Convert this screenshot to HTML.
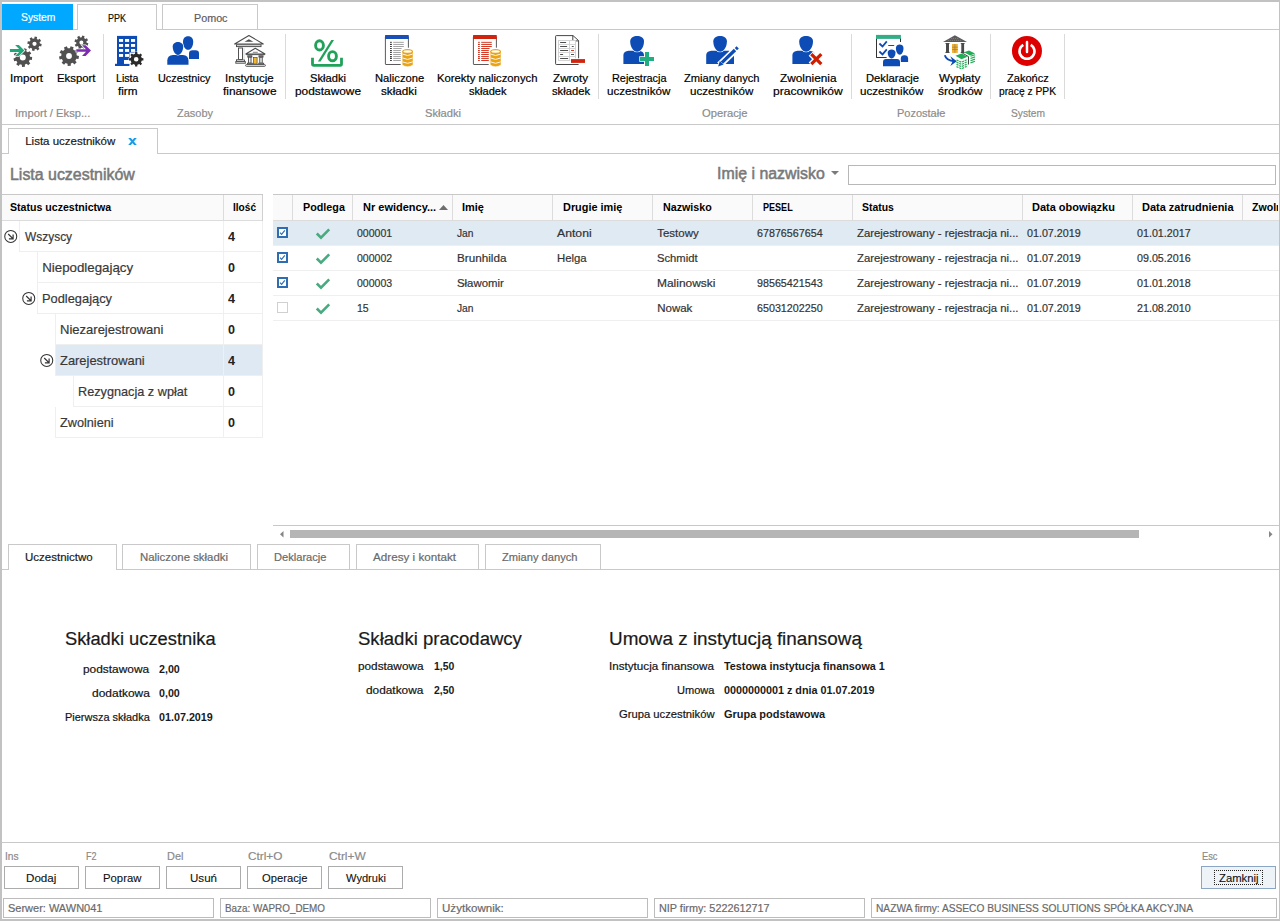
<!DOCTYPE html>
<html><head><meta charset="utf-8"><style>
html,body{margin:0;padding:0;}
body{width:1280px;height:921px;position:relative;overflow:hidden;background:#fff;font-family:"Liberation Sans",sans-serif;}
.t{position:absolute;white-space:pre;line-height:1;transform-origin:0 0;}
svg{position:absolute;overflow:visible;}
</style></head><body>
<div style="position:absolute;left:2px;top:29px;width:1277px;height:1px;background:#c9c9c9"></div>
<div style="position:absolute;left:2px;top:4px;width:71px;height:26px;background:#00a9ff"></div>
<div class="t" style="left:20.60px;top:11.60px;font-size:11.5px;font-weight:400;color:#ffffff;transform:scaleX(0.8971);-webkit-text-stroke:0.2px #ffffff;">System</div>
<div style="position:absolute;left:77px;top:4px;width:80px;height:26px;box-sizing:border-box;border:1px solid #c9c9c9;border-bottom:none;background:#fff"></div>
<div class="t" style="left:108.30px;top:12.60px;font-size:11.5px;font-weight:400;color:#101010;transform:scaleX(0.7821);-webkit-text-stroke:0.2px #101010;">PPK</div>
<div style="position:absolute;left:162px;top:4px;width:96px;height:26px;box-sizing:border-box;border:1px solid #c9c9c9;background:#fff"></div>
<div class="t" style="left:193.55px;top:12.60px;font-size:11.5px;font-weight:400;color:#5e5a60;transform:scaleX(0.9358);-webkit-text-stroke:0.2px #5e5a60;">Pomoc</div>
<div style="position:absolute;left:103px;top:34px;width:1px;height:65px;background:#dadada"></div>
<div style="position:absolute;left:285px;top:34px;width:1px;height:65px;background:#dadada"></div>
<div style="position:absolute;left:598px;top:34px;width:1px;height:65px;background:#dadada"></div>
<div style="position:absolute;left:851px;top:34px;width:1px;height:65px;background:#dadada"></div>
<div style="position:absolute;left:990px;top:34px;width:1px;height:65px;background:#dadada"></div>
<div style="position:absolute;left:1064px;top:34px;width:1px;height:65px;background:#dadada"></div>
<div style="position:absolute;left:2px;top:124px;width:1277px;height:1px;background:#c9c9c9"></div>
<div class="t" style="left:9.80px;top:72.60px;font-size:11.5px;font-weight:400;color:#000000;transform:scaleX(1.0125);-webkit-text-stroke:0.2px #000000;">Import</div>
<div class="t" style="left:56.55px;top:72.60px;font-size:11.5px;font-weight:400;color:#000000;transform:scaleX(0.9872);-webkit-text-stroke:0.2px #000000;">Eksport</div>
<div class="t" style="left:116.25px;top:72.60px;font-size:11.5px;font-weight:400;color:#000000;transform:scaleX(0.9260);-webkit-text-stroke:0.2px #000000;">Lista</div>
<div class="t" style="left:117.75px;top:85.60px;font-size:11.5px;font-weight:400;color:#000000;transform:scaleX(1.0171);-webkit-text-stroke:0.2px #000000;">firm</div>
<div class="t" style="left:157.55px;top:72.60px;font-size:11.5px;font-weight:400;color:#000000;transform:scaleX(0.9441);-webkit-text-stroke:0.2px #000000;">Uczestnicy</div>
<div class="t" style="left:225.10px;top:72.60px;font-size:11.5px;font-weight:400;color:#000000;-webkit-text-stroke:0.2px #000000;">Instytucje</div>
<div class="t" style="left:222.75px;top:85.60px;font-size:11.5px;font-weight:400;color:#000000;transform:scaleX(1.0329);-webkit-text-stroke:0.2px #000000;">finansowe</div>
<div class="t" style="left:309.50px;top:72.60px;font-size:11.5px;font-weight:400;color:#000000;transform:scaleX(0.9709);-webkit-text-stroke:0.2px #000000;">Składki</div>
<div class="t" style="left:294.50px;top:85.60px;font-size:11.5px;font-weight:400;color:#000000;transform:scaleX(1.0323);-webkit-text-stroke:0.2px #000000;">podstawowe</div>
<div class="t" style="left:374.60px;top:72.60px;font-size:11.5px;font-weight:400;color:#000000;transform:scaleX(0.9743);-webkit-text-stroke:0.2px #000000;">Naliczone</div>
<div class="t" style="left:381.30px;top:85.60px;font-size:11.5px;font-weight:400;color:#000000;transform:scaleX(1.0183);-webkit-text-stroke:0.2px #000000;">składki</div>
<div class="t" style="left:437.05px;top:72.60px;font-size:11.5px;font-weight:400;color:#000000;transform:scaleX(0.9826);-webkit-text-stroke:0.2px #000000;">Korekty naliczonych</div>
<div class="t" style="left:468.55px;top:85.60px;font-size:11.5px;font-weight:400;color:#000000;transform:scaleX(0.9615);-webkit-text-stroke:0.2px #000000;">składek</div>
<div class="t" style="left:553.30px;top:72.60px;font-size:11.5px;font-weight:400;color:#000000;transform:scaleX(1.0145);-webkit-text-stroke:0.2px #000000;">Zwroty</div>
<div class="t" style="left:551.80px;top:85.60px;font-size:11.5px;font-weight:400;color:#000000;transform:scaleX(0.9744);-webkit-text-stroke:0.2px #000000;">składek</div>
<div class="t" style="left:611.75px;top:72.60px;font-size:11.5px;font-weight:400;color:#000000;transform:scaleX(0.9473);-webkit-text-stroke:0.2px #000000;">Rejestracja</div>
<div class="t" style="left:607.35px;top:85.60px;font-size:11.5px;font-weight:400;color:#000000;transform:scaleX(1.0105);-webkit-text-stroke:0.2px #000000;">uczestników</div>
<div class="t" style="left:684.05px;top:72.60px;font-size:11.5px;font-weight:400;color:#000000;transform:scaleX(0.9681);-webkit-text-stroke:0.2px #000000;">Zmiany danych</div>
<div class="t" style="left:690.15px;top:85.60px;font-size:11.5px;font-weight:400;color:#000000;transform:scaleX(1.0105);-webkit-text-stroke:0.2px #000000;">uczestników</div>
<div class="t" style="left:779.85px;top:72.60px;font-size:11.5px;font-weight:400;color:#000000;transform:scaleX(1.0276);-webkit-text-stroke:0.2px #000000;">Zwolnienia</div>
<div class="t" style="left:773.20px;top:85.60px;font-size:11.5px;font-weight:400;color:#000000;transform:scaleX(1.0499);-webkit-text-stroke:0.2px #000000;">pracowników</div>
<div class="t" style="left:865.60px;top:72.60px;font-size:11.5px;font-weight:400;color:#000000;transform:scaleX(0.9756);-webkit-text-stroke:0.2px #000000;">Deklaracje</div>
<div class="t" style="left:860.45px;top:85.60px;font-size:11.5px;font-weight:400;color:#000000;transform:scaleX(1.0105);-webkit-text-stroke:0.2px #000000;">uczestników</div>
<div class="t" style="left:939.15px;top:72.60px;font-size:11.5px;font-weight:400;color:#000000;transform:scaleX(1.0123);-webkit-text-stroke:0.2px #000000;">Wypłaty</div>
<div class="t" style="left:937.55px;top:85.60px;font-size:11.5px;font-weight:400;color:#000000;transform:scaleX(1.0390);-webkit-text-stroke:0.2px #000000;">środków</div>
<div class="t" style="left:1006.70px;top:72.60px;font-size:11.5px;font-weight:400;color:#000000;transform:scaleX(0.9616);-webkit-text-stroke:0.2px #000000;">Zakończ</div>
<div class="t" style="left:999.10px;top:85.60px;font-size:11.5px;font-weight:400;color:#000000;transform:scaleX(0.8917);-webkit-text-stroke:0.2px #000000;">pracę z PPK</div>
<div class="t" style="left:14.65px;top:107.60px;font-size:11.5px;font-weight:400;color:#8c8c8c;transform:scaleX(0.9738);-webkit-text-stroke:0.2px #8c8c8c;">Import / Eksp...</div>
<div class="t" style="left:177.00px;top:107.60px;font-size:11.5px;font-weight:400;color:#8c8c8c;transform:scaleX(0.9544);-webkit-text-stroke:0.2px #8c8c8c;">Zasoby</div>
<div class="t" style="left:424.50px;top:107.60px;font-size:11.5px;font-weight:400;color:#8c8c8c;transform:scaleX(0.9709);-webkit-text-stroke:0.2px #8c8c8c;">Składki</div>
<div class="t" style="left:702.45px;top:107.60px;font-size:11.5px;font-weight:400;color:#8c8c8c;transform:scaleX(0.9749);-webkit-text-stroke:0.2px #8c8c8c;">Operacje</div>
<div class="t" style="left:897.45px;top:107.60px;font-size:11.5px;font-weight:400;color:#8c8c8c;transform:scaleX(0.9561);-webkit-text-stroke:0.2px #8c8c8c;">Pozostałe</div>
<div class="t" style="left:1010.50px;top:107.60px;font-size:11.5px;font-weight:400;color:#8c8c8c;transform:scaleX(0.8867);-webkit-text-stroke:0.2px #8c8c8c;">System</div>
<svg style="left:6px;top:32px" width="40" height="38" viewBox="0 0 40 38"><path fill-rule="evenodd" fill="#505050" d="M33.90 11.59 L35.70 11.97 L35.20 14.45 L33.39 14.10 L32.47 15.46 L33.47 17.01 L31.36 18.41 L30.33 16.88 L28.71 17.20 L28.33 19.00 L25.85 18.50 L26.20 16.69 L24.84 15.77 L23.29 16.77 L21.89 14.66 L23.42 13.63 L23.10 12.01 L21.30 11.63 L21.80 9.15 L23.61 9.50 L24.53 8.14 L23.53 6.59 L25.64 5.19 L26.67 6.72 L28.29 6.40 L28.67 4.60 L31.15 5.10 L30.80 6.91 L32.16 7.83 L33.71 6.83 L35.11 8.94 L33.58 9.97 Z M30.60 11.80 A2.1 2.1 0 1 0 26.40 11.80 A2.1 2.1 0 1 0 30.60 11.80 Z"/><path fill-rule="evenodd" fill="#505050" d="M24.05 24.78 L26.18 25.06 L25.89 27.99 L23.75 27.85 L22.89 29.63 L24.33 31.22 L22.23 33.27 L20.68 31.79 L18.87 32.60 L18.96 34.75 L16.02 34.97 L15.79 32.83 L13.89 32.29 L12.57 34.00 L10.18 32.28 L11.38 30.49 L10.27 28.85 L8.16 29.31 L7.44 26.46 L9.50 25.86 L9.70 23.89 L7.80 22.89 L9.07 20.24 L11.04 21.11 L12.46 19.73 L11.64 17.74 L14.32 16.53 L15.27 18.46 L17.25 18.31 L17.90 16.26 L20.73 17.06 L20.22 19.15 L21.83 20.31 L23.64 19.16 L25.30 21.59 L23.57 22.86 Z M19.80 25.60 A3.0 3.0 0 1 0 13.80 25.60 A3.0 3.0 0 1 0 19.80 25.60 Z"/><path d="M3.9 16.9 L14.6 16.9 L14.6 20 L3.9 20 Z M9.1 13 L12.9 13 L18.4 18.45 L12.9 24 L9.1 24 L14.6 18.45 Z" fill="#1fa67a" stroke="#fff" stroke-width="1.5" paint-order="stroke"/></svg>
<svg style="left:55px;top:32px" width="40" height="38" viewBox="0 0 40 38"><path fill-rule="evenodd" fill="#505050" d="M31.59 10.81 L33.35 11.36 L32.62 13.71 L30.86 13.17 L29.85 14.39 L30.70 16.02 L28.53 17.17 L27.67 15.54 L26.09 15.69 L25.54 17.45 L23.19 16.72 L23.73 14.96 L22.51 13.95 L20.88 14.80 L19.73 12.63 L21.36 11.77 L21.21 10.19 L19.45 9.64 L20.18 7.29 L21.94 7.83 L22.95 6.61 L22.10 4.98 L24.27 3.83 L25.13 5.46 L26.71 5.31 L27.26 3.55 L29.61 4.28 L29.07 6.04 L30.29 7.05 L31.92 6.20 L33.07 8.37 L31.44 9.23 Z M28.40 10.50 A2.0 2.0 0 1 0 24.40 10.50 A2.0 2.0 0 1 0 28.40 10.50 Z"/><path fill-rule="evenodd" fill="#505050" d="M21.78 23.51 L24.00 23.93 L23.53 27.02 L21.29 26.77 L20.28 28.63 L21.71 30.37 L19.36 32.44 L17.81 30.81 L15.83 31.58 L15.81 33.84 L12.68 33.91 L12.54 31.66 L10.53 30.99 L9.06 32.70 L6.62 30.74 L7.96 28.93 L6.85 27.12 L4.63 27.49 L4.01 24.42 L6.20 23.89 L6.52 21.80 L4.58 20.65 L6.08 17.90 L8.09 18.90 L9.68 17.50 L8.94 15.38 L11.85 14.23 L12.75 16.30 L14.87 16.25 L15.67 14.14 L18.63 15.14 L17.99 17.30 L19.65 18.62 L21.61 17.52 L23.25 20.19 L21.37 21.43 Z M16.90 24.00 A2.9 2.9 0 1 0 11.10 24.00 A2.9 2.9 0 1 0 16.90 24.00 Z"/><path d="M21.3 17.2 L32.2 17.2 L32.2 19.7 L21.3 19.7 Z M27 13.2 L30.6 13.2 L36 18.45 L30.6 24 L27 24 L32.2 18.45 Z" fill="#7b2cb0" stroke="#fff" stroke-width="1.5" paint-order="stroke"/></svg>
<svg style="left:110px;top:32px" width="40" height="38" viewBox="0 0 40 38"><rect x="7" y="3.9" width="20.1" height="29" fill="#0d4cb4"/><rect x="5" y="31.8" width="14.8" height="2.2" fill="#0d4cb4"/><rect x="9" y="7" width="4.1" height="2.9" fill="#fff"/><rect x="15" y="7" width="4.1" height="2.9" fill="#fff"/><rect x="21" y="7" width="4.1" height="2.9" fill="#fff"/><rect x="9" y="12" width="4.1" height="2.9" fill="#fff"/><rect x="15" y="12" width="4.1" height="2.9" fill="#fff"/><rect x="21" y="12" width="4.1" height="2.9" fill="#fff"/><rect x="9" y="17" width="4.1" height="2.9" fill="#fff"/><rect x="15" y="17" width="4.1" height="2.9" fill="#fff"/><rect x="21" y="17" width="4.1" height="2.9" fill="#fff"/><rect x="9" y="22" width="4.1" height="2.9" fill="#fff"/><rect x="15" y="22" width="4.1" height="2.9" fill="#fff"/><rect x="14" y="28" width="6" height="3.9" fill="#fff"/><rect x="19.5" y="20.5" width="9" height="14" fill="#fff"/><path fill-rule="evenodd" fill="#2b2b2b" stroke="#fff" stroke-width="0.8" paint-order="stroke" d="M25.00 21.73 L25.11 20.08 L27.29 20.08 L27.40 21.73 L29.29 22.51 L30.54 21.43 L32.07 22.96 L30.99 24.21 L31.77 26.10 L33.42 26.21 L33.42 28.39 L31.77 28.50 L30.99 30.39 L32.07 31.64 L30.54 33.17 L29.29 32.09 L27.40 32.87 L27.29 34.52 L25.11 34.52 L25.00 32.87 L23.11 32.09 L21.86 33.17 L20.33 31.64 L21.41 30.39 L20.63 28.50 L18.98 28.39 L18.98 26.21 L20.63 26.10 L21.41 24.21 L20.33 22.96 L21.86 21.43 L23.11 22.51 Z M28.50 27.30 A2.3 2.3 0 1 0 23.90 27.30 A2.3 2.3 0 1 0 28.50 27.30 Z"/></svg>
<svg style="left:163px;top:32px" width="40" height="38" viewBox="0 0 40 38"><path d="M26 27 L26 21.5 Q26 18.2 29.5 18.2 L32.5 18.2 Q36 18.2 36 21.5 L36 27 Z" fill="#0d4cb4"/><path d="M20 9.5 C20 2.5 30.2 2.5 30.2 9.5 C30.2 14.5 28 17.8 25.1 17.8 C22.2 17.8 20 14.5 20 9.5 Z" fill="#0d4cb4" stroke="#fff" stroke-width="1.1" paint-order="stroke"/><path d="M4.3 32.8 L4.3 28.5 Q4.5 23.3 10 23 L20 23 Q25.3 23.3 25.5 28.5 L25.5 32.8 Z" fill="#0d4cb4" stroke="#fff" stroke-width="1.2" paint-order="stroke"/><path d="M9.7 14.5 C9.7 8.5 20.2 8.5 20.2 14.5 C20.2 19 17.5 22.9 14.95 22.9 C12.4 22.9 9.7 19 9.7 14.5 Z" fill="#0d4cb4" stroke="#fff" stroke-width="1.2" paint-order="stroke"/></svg>
<svg style="left:230px;top:32px" width="40" height="38" viewBox="0 0 40 38"><path d="M4.6 12 L18.9 3.5 L33.3 12 Z" fill="#fff" stroke="#4a4a4a" stroke-width="1.05" stroke-linejoin="round"/><path d="M14.5 9.8 L18.9 7.3 L23.3 9.8 Z" fill="#4a4a4a"/><rect x="6.5" y="12.8" width="24.5" height="1.8" fill="#fff" stroke="#4a4a4a" stroke-width="0.95"/><rect x="8.5" y="16" width="4" height="11.5" fill="#fff" stroke="#4a4a4a" stroke-width="0.95"/><rect x="6.5" y="27.8" width="8" height="1.6" fill="#fff" stroke="#4a4a4a" stroke-width="0.95"/><rect x="5.8" y="29.6" width="9.5" height="1.6" fill="#fff" stroke="#4a4a4a" stroke-width="0.95"/><path d="M14 16 L14 28" stroke="#d8d8d8" stroke-width="1"/><path d="M15.8 22 L25.3 16.3 L35 22 Z" fill="#fff" stroke="#4a4a4a" stroke-width="1.05" stroke-linejoin="round"/><path d="M22.8 20.3 L27.8 20.3" stroke="#4a4a4a" stroke-width="0.7"/><rect x="16" y="22.2" width="19" height="0.9" fill="#4a4a4a"/><rect x="17.8" y="23.8" width="4" height="1.2" fill="#fff" stroke="#4a4a4a" stroke-width="1"/><rect x="29" y="23.8" width="4" height="1.2" fill="#fff" stroke="#4a4a4a" stroke-width="1"/><rect x="18.6" y="25.2" width="2.4" height="6" fill="#fff" stroke="#4a4a4a" stroke-width="1"/><rect x="29.8" y="25.2" width="2.4" height="6" fill="#fff" stroke="#4a4a4a" stroke-width="1"/><rect x="23.5" y="25.6" width="3.6" height="6.4" fill="#f2b731" stroke="#3d4a66" stroke-width="0.7"/><rect x="17.5" y="31.2" width="5" height="1" fill="#fff" stroke="#4a4a4a" stroke-width="0.8"/><rect x="28.7" y="31.2" width="5" height="1" fill="#fff" stroke="#4a4a4a" stroke-width="0.8"/><rect x="15.6" y="32.6" width="19.8" height="1.7" rx="0.8" fill="#fff" stroke="#4a4a4a" stroke-width="0.95"/></svg>
<svg style="left:307px;top:32px" width="40" height="38" viewBox="0 0 40 38"><ellipse cx="12.5" cy="13.4" rx="3.9" ry="4.6" fill="none" stroke="#21a25b" stroke-width="2.9"/><ellipse cx="25.5" cy="24.2" rx="3.9" ry="4.6" fill="none" stroke="#21a25b" stroke-width="2.9"/><path d="M24.3 8 L27 8 L13.6 29.6 L10.9 29.6 Z" fill="#21a25b"/><path d="M5.5 25.8 L5.5 32 Q5.5 33.3 6.8 33.3 L33.2 33.3 Q34.5 33.3 34.5 32 L34.5 25.8" fill="none" stroke="#21a25b" stroke-width="2.8"/></svg>
<svg style="left:380px;top:32px" width="40" height="38" viewBox="0 0 40 38"><path d="M20.7 32.5 L5.9 32.5 Q5.4 32.5 5.4 32 L5.4 5 L28.4 5 L28.4 15.7" fill="#fff" stroke="#474747" stroke-width="0.9"/><rect x="5.0" y="2.9" width="23.8" height="4.1" rx="0.6" fill="#1a50b6"/><rect x="10.0" y="9.75" width="1.9" height="1.1" rx="0.5" fill="#2a2a2a"/><rect x="13.2" y="9.850000000000001" width="10.6" height="0.9" fill="#9a9a9a"/><rect x="10.0" y="11.85" width="1.9" height="1.1" rx="0.5" fill="#2a2a2a"/><rect x="13.2" y="11.950000000000001" width="10.6" height="0.9" fill="#9a9a9a"/><rect x="10.0" y="13.95" width="1.9" height="1.1" rx="0.5" fill="#2a2a2a"/><rect x="13.2" y="14.05" width="10.6" height="0.9" fill="#9a9a9a"/><rect x="10.0" y="15.95" width="1.9" height="1.1" rx="0.5" fill="#2a2a2a"/><rect x="13.2" y="16.05" width="8.4" height="0.9" fill="#9a9a9a"/><rect x="10.0" y="18.05" width="1.9" height="1.1" rx="0.5" fill="#2a2a2a"/><rect x="13.2" y="18.150000000000002" width="7.6" height="0.9" fill="#9a9a9a"/><rect x="10.0" y="19.95" width="1.9" height="1.1" rx="0.5" fill="#2a2a2a"/><rect x="13.2" y="20.05" width="7.6" height="0.9" fill="#9a9a9a"/><rect x="10.0" y="21.95" width="1.9" height="1.1" rx="0.5" fill="#2a2a2a"/><rect x="13.2" y="22.05" width="7.6" height="0.9" fill="#9a9a9a"/><rect x="10.0" y="24.05" width="1.9" height="1.1" rx="0.5" fill="#2a2a2a"/><rect x="13.2" y="24.150000000000002" width="7.6" height="0.9" fill="#9a9a9a"/><rect x="10.0" y="25.849999999999998" width="1.9" height="1.1" rx="0.5" fill="#2a2a2a"/><rect x="13.2" y="25.95" width="7.6" height="0.9" fill="#9a9a9a"/><rect x="10.0" y="27.95" width="1.9" height="1.1" rx="0.5" fill="#2a2a2a"/><rect x="13.2" y="28.05" width="7.6" height="0.9" fill="#9a9a9a"/><path d="M22.200000000000003 19.4 L22.200000000000003 33.0 Q27.6 36.4 33.0 33.0 L33.0 19.4 Z" fill="#eaa312" stroke="#fff" stroke-width="0.5"/><ellipse cx="27.6" cy="19.4" rx="5.4" ry="2.3" fill="#eaa312"/><ellipse cx="27.6" cy="19.5" rx="4.2" ry="1.2" fill="#fff"/><path d="M22.6 22.1 Q27.6 24.900000000000002 32.6 22.1" fill="none" stroke="#fff" stroke-width="0.9"/><path d="M22.6 26.0 Q27.6 28.8 32.6 26.0" fill="none" stroke="#fff" stroke-width="0.9"/><path d="M22.6 29.900000000000002 Q27.6 32.7 32.6 29.900000000000002" fill="none" stroke="#fff" stroke-width="0.9"/></svg>
<svg style="left:467px;top:32px" width="40" height="38" viewBox="0 0 40 38"><path d="M21.7 32.5 L6.9 32.5 Q6.4 32.5 6.4 32 L6.4 5 L29.4 5 L29.4 15.7" fill="#fff" stroke="#474747" stroke-width="0.9"/><rect x="6.0" y="2.9" width="23.8" height="4.1" rx="0.6" fill="#d0240e"/><rect x="11.0" y="9.75" width="1.9" height="1.1" rx="0.5" fill="#d0240e"/><rect x="14.2" y="9.850000000000001" width="10.6" height="0.9" fill="#d0240e"/><rect x="11.0" y="11.85" width="1.9" height="1.1" rx="0.5" fill="#d0240e"/><rect x="14.2" y="11.950000000000001" width="10.6" height="0.9" fill="#d0240e"/><rect x="11.0" y="13.95" width="1.9" height="1.1" rx="0.5" fill="#d0240e"/><rect x="14.2" y="14.05" width="10.6" height="0.9" fill="#d0240e"/><rect x="11.0" y="15.95" width="1.9" height="1.1" rx="0.5" fill="#d0240e"/><rect x="14.2" y="16.05" width="8.4" height="0.9" fill="#d0240e"/><rect x="11.0" y="18.05" width="1.9" height="1.1" rx="0.5" fill="#d0240e"/><rect x="14.2" y="18.150000000000002" width="7.6" height="0.9" fill="#d0240e"/><rect x="11.0" y="19.95" width="1.9" height="1.1" rx="0.5" fill="#d0240e"/><rect x="14.2" y="20.05" width="7.6" height="0.9" fill="#d0240e"/><rect x="11.0" y="21.95" width="1.9" height="1.1" rx="0.5" fill="#d0240e"/><rect x="14.2" y="22.05" width="7.6" height="0.9" fill="#d0240e"/><rect x="11.0" y="24.05" width="1.9" height="1.1" rx="0.5" fill="#d0240e"/><rect x="14.2" y="24.150000000000002" width="7.6" height="0.9" fill="#d0240e"/><rect x="11.0" y="25.849999999999998" width="1.9" height="1.1" rx="0.5" fill="#d0240e"/><rect x="14.2" y="25.95" width="7.6" height="0.9" fill="#d0240e"/><rect x="11.0" y="27.95" width="1.9" height="1.1" rx="0.5" fill="#d0240e"/><rect x="14.2" y="28.05" width="7.6" height="0.9" fill="#d0240e"/><path d="M23.200000000000003 19.4 L23.200000000000003 33.0 Q28.6 36.4 34.0 33.0 L34.0 19.4 Z" fill="#eaa312" stroke="#fff" stroke-width="0.5"/><ellipse cx="28.6" cy="19.4" rx="5.4" ry="2.3" fill="#eaa312"/><ellipse cx="28.6" cy="19.5" rx="4.2" ry="1.2" fill="#fff"/><path d="M23.6 22.1 Q28.6 24.900000000000002 33.6 22.1" fill="none" stroke="#fff" stroke-width="0.9"/><path d="M23.6 26.0 Q28.6 28.8 33.6 26.0" fill="none" stroke="#fff" stroke-width="0.9"/><path d="M23.6 29.900000000000002 Q28.6 32.7 33.6 29.900000000000002" fill="none" stroke="#fff" stroke-width="0.9"/></svg>
<svg style="left:552px;top:32px" width="40" height="38" viewBox="0 0 40 38"><path d="M26.6 27 L26.6 8.6 L21 3.6 L4.3 3.6 Q3.6 3.6 3.6 4.3 L3.6 31.8 Q3.6 32.5 4.3 32.5 L26.6 32.5" fill="#fff" stroke="#474747" stroke-width="1.0"/><path d="M20.8 3.6 L20.8 8.9 L26.6 8.9" fill="none" stroke="#474747" stroke-width="1.0"/><rect x="6.5" y="8.5" width="17" height="20" fill="#fff" stroke="#cfcfcf" stroke-width="0.9"/><path d="M6.5 12.5 L23.5 12.5" stroke="#cfcfcf" stroke-width="0.9"/><path d="M6.5 16.5 L23.5 16.5" stroke="#cfcfcf" stroke-width="0.9"/><path d="M6.5 20.5 L23.5 20.5" stroke="#cfcfcf" stroke-width="0.9"/><path d="M6.5 24.5 L23.5 24.5" stroke="#cfcfcf" stroke-width="0.9"/><path d="M17.5 8.5 L17.5 28.5" stroke="#cfcfcf" stroke-width="0.9"/><rect x="8.1" y="10.05" width="6" height="0.9" fill="#3a3a3a"/><rect x="8.1" y="14.05" width="7" height="0.9" fill="#3a3a3a"/><rect x="8.1" y="18.05" width="8" height="0.9" fill="#3a3a3a"/><rect x="8.1" y="22.05" width="3" height="0.9" fill="#3a3a3a"/><rect x="8.1" y="26.05" width="8" height="0.9" fill="#3a3a3a"/><rect x="19.8" y="14.05" width="1.9" height="0.9" fill="#3a3a3a"/><rect x="19.0" y="18.05" width="3" height="0.9" fill="#d0240e"/><rect x="19.0" y="22.05" width="3" height="0.9" fill="#3a3a3a"/><rect x="18.3" y="26.3" width="15.5" height="5.3" fill="#fff"/><rect x="19" y="27.1" width="14" height="3.8" fill="#d0240e"/></svg>
<svg style="left:618px;top:32px" width="40" height="38" viewBox="0 0 40 38"><path d="M5.4 32 L5.4 23.0 Q5.7 19.2 10.600000000000001 18.8 L20.8 18.8 Q25.7 19.2 26 23.0 L26 32 Z" fill="#0d4cb4"/><path d="M12.200000000000001 9.325000000000001 C12.200000000000001 2.27 26.0 2.27 26.0 9.325000000000001 C26.0 15.55 22.55 19.7 19.1 19.7 C15.650000000000002 19.7 12.200000000000001 15.55 12.200000000000001 9.325000000000001 Z" fill="#0d4cb4" stroke="#fff" stroke-width="1.2" paint-order="stroke"/><path d="M27 20 L31 20 L31 25 L36 25 L36 29 L31 29 L31 34 L27 34 L27 29 L22 29 L22 25 L27 25 Z" fill="#21ae80" stroke="#fff" stroke-width="1.4" paint-order="stroke"/></svg>
<svg style="left:700px;top:32px" width="40" height="38" viewBox="0 0 40 38"><path d="M6.2 32 L6.2 23.0 Q6.5 19.2 11.4 18.8 L28.8 18.8 Q33.7 19.2 34 23.0 L34 32 Z" fill="#0d4cb4"/><path d="M13.3 9.325000000000001 C13.3 2.27 26.900000000000002 2.27 26.900000000000002 9.325000000000001 C26.900000000000002 15.55 23.5 19.7 20.1 19.7 C16.700000000000003 19.7 13.3 15.55 13.3 9.325000000000001 Z" fill="#0d4cb4" stroke="#fff" stroke-width="1.2" paint-order="stroke"/><path d="M19.5 33 L37.5 15.8" stroke="#fff" stroke-width="6.6"/><path d="M21.9 30.6 L35.0 18.0" stroke="#0d4cb4" stroke-width="3.3"/><path d="M35.9 17.1 L37.7 15.4" stroke="#0d4cb4" stroke-width="3.3"/><path d="M18.2 34.4 L19.8 29.0 L23.6 32.6 Z" fill="#0d4cb4"/></svg>
<svg style="left:787px;top:32px" width="40" height="38" viewBox="0 0 40 38"><path d="M5.4 32 L5.4 23.0 Q5.7 19.2 10.600000000000001 18.8 L22.8 18.8 Q27.7 19.2 28 23.0 L28 32 Z" fill="#0d4cb4"/><path d="M12.200000000000001 9.325000000000001 C12.200000000000001 2.27 26.0 2.27 26.0 9.325000000000001 C26.0 15.55 22.55 19.7 19.1 19.7 C15.650000000000002 19.7 12.200000000000001 15.55 12.200000000000001 9.325000000000001 Z" fill="#0d4cb4" stroke="#fff" stroke-width="1.2" paint-order="stroke"/><path d="M23.8 21.7 L34.8 32.7 M34.8 21.7 L23.8 32.7" stroke="#fff" stroke-width="6"/><path d="M24.3 22.2 L34.3 32.2 M34.3 22.2 L24.3 32.2" stroke="#d01e00" stroke-width="3.3"/></svg>
<svg style="left:872px;top:32px" width="40" height="38" viewBox="0 0 40 38"><path d="M4.5 6 L4.5 25.5 L14.5 25.5 M28.5 6 L28.5 10" fill="#fff" stroke="#333" stroke-width="1.0"/><rect x="4.5" y="6" width="24" height="19.5" fill="#fff"/><path d="M4.5 6 L4.5 25.5 L14.5 25.5 M28.5 6 L28.5 10" fill="none" stroke="#333" stroke-width="1.0"/><rect x="4" y="2.9" width="24.9" height="4" fill="#33ad86"/><path d="M7.4 11.5 L10.5 14.5 L14.8 9.4" fill="none" stroke="#0d4cb4" stroke-width="1.8"/><path d="M7.4 19.5 L10.5 22.4 L14.8 17.4" fill="none" stroke="#0d4cb4" stroke-width="1.8"/><rect x="16.2" y="13" width="6" height="0.9" fill="#333"/><path d="M28.8 30 L28.8 26.5 Q29 23.2 32.3 23.2 L32.6 23.2 Q35.9 23.2 36.1 26.5 L36.1 30 Z" fill="#0d4cb4"/><path d="M23.9 16.012500000000003 C23.9 11.465 31.5 11.465 31.5 16.012500000000003 C31.5 20.025000000000002 29.599999999999998 22.7 27.7 22.7 C25.8 22.7 23.9 20.025000000000002 23.9 16.012500000000003 Z" fill="#0d4cb4" stroke="#fff" stroke-width="1.2" paint-order="stroke"/><path d="M11 34.3 L11 30 Q11 27 14 27 L25 27 Q28 27 28 30 L28 34.3 Z" fill="#0d4cb4" stroke="#fff" stroke-width="1.2" paint-order="stroke"/><path d="M15.700000000000001 20.4625 C15.700000000000001 16.424999999999997 23.5 16.424999999999997 23.5 20.4625 C23.5 24.025 21.55 26.4 19.6 26.4 C17.650000000000002 26.4 15.700000000000001 24.025 15.700000000000001 20.4625 Z" fill="#0d4cb4" stroke="#fff" stroke-width="1.2" paint-order="stroke"/></svg>
<svg style="left:939px;top:32px" width="40" height="38" viewBox="0 0 40 38"><path d="M4 9.9 L15.9 3.3 L28 9.9 Z" fill="#5a5a5a"/><path d="M9 8.3 L23 8.3 M12 6.4 L20 6.4" stroke="#9a9a9a" stroke-width="0.6" stroke-dasharray="1.2 0.8"/><path d="M6.2 11 L10.8 11 L10 12.3 L10 19.6 L10.8 20.9 L6.2 20.9 L7 19.6 L7 12.3 Z" fill="#4a4a4a"/><path d="M21.5 11 L25.9 11 L25.1 12.3 L25.1 19.6 L25.9 20.9 L21.5 20.9 L22.3 19.6 L22.3 12.3 Z" fill="#4a4a4a"/><rect x="13" y="12" width="5.8" height="8.9" fill="#f0b22e"/><path d="M15.9 12 L15.9 20.9 M13 15.2 L18.8 15.2 M13 17.5 L18.8 17.5" stroke="#9a7a52" stroke-width="0.7"/><path d="M5.8 23.3 Q7.5 29 15.5 29.2" fill="none" stroke="#0d4cb4" stroke-width="1.9"/><path d="M11.3 24.2 L17.8 29.3 L11.3 34 L13.7 29.3 Z" fill="#0d4cb4"/><path d="M16.5 23.8 L22.5 21.5 L28.5 24.8 L22.5 27.3 Z" fill="#1fae55"/><path d="M25 20.3 L30 18.4 L36 21.6 L31 23.6 Z" fill="#1fae55"/><path d="M17.5 28.0 L22.5 30.2 L28.5 27.4" fill="none" stroke="#1fae55" stroke-width="1.2" stroke-dasharray="2.2 0.8"/><path d="M17.5 30.2 L22.5 32.4 L28.5 29.599999999999998" fill="none" stroke="#1fae55" stroke-width="1.2" stroke-dasharray="2.2 0.8"/><path d="M17.5 32.4 L22.5 34.6 L28.5 31.799999999999997" fill="none" stroke="#1fae55" stroke-width="1.2" stroke-dasharray="2.2 0.8"/><path d="M17.5 34.6 L22.5 36.800000000000004 L28.5 34.0" fill="none" stroke="#1fae55" stroke-width="1.2" stroke-dasharray="2.2 0.8"/><path d="M31.5 24.3 L36 22.7" fill="none" stroke="#1fae55" stroke-width="1.2"/><path d="M31.5 26.5 L36 24.9" fill="none" stroke="#1fae55" stroke-width="1.2"/><path d="M31.5 28.700000000000003 L36 27.1" fill="none" stroke="#1fae55" stroke-width="1.2"/><path d="M31.5 30.900000000000002 L36 29.3" fill="none" stroke="#1fae55" stroke-width="1.2"/><path d="M23.2 21 L29.5 24.6 L29.5 32.5" fill="none" stroke="#333" stroke-width="0.9"/></svg>
<svg style="left:1007px;top:32px" width="40" height="38" viewBox="0 0 40 38"><circle cx="19.95" cy="18.9" r="15" fill="#dc0000"/><path d="M16.3 12.8 A7.5 7.5 0 1 0 23.7 12.8" fill="none" stroke="#fff" stroke-width="2.6"/><path d="M20 10.0 L20 20.0" stroke="#fff" stroke-width="2.5" stroke-linecap="round"/></svg>
<div style="position:absolute;left:2px;top:153px;width:1277px;height:1px;background:#c9c9c9"></div>
<div style="position:absolute;left:8px;top:128px;width:150px;height:26px;box-sizing:border-box;border:1px solid #c9c9c9;border-bottom:none;background:#fff"></div>
<div class="t" style="left:25.20px;top:136.10px;font-size:11.5px;font-weight:400;color:#1a1a1a;-webkit-text-stroke:0.2px #1a1a1a;">Lista uczestników</div>
<svg style="left:128px;top:138px" width="9" height="7" viewBox="0 0 9 7"><path d="M0.2 0 L2.9 0 L8.8 7 L6.1 7 Z M6.1 0 L8.8 0 L2.9 7 L0.2 7 Z" fill="#1a9de6"/></svg>
<div class="t" style="left:9.80px;top:167.05px;font-size:15.6px;font-weight:400;color:#787878;transform:scaleX(1.0211);-webkit-text-stroke:0.5px #787878;">Lista uczestników</div>
<div style="position:absolute;left:2px;top:194px;width:261px;height:1px;background:#c8c8c8"></div>
<div style="position:absolute;left:2px;top:195px;width:260px;height:25px;background:#fafafa"></div>
<div style="position:absolute;left:2px;top:220px;width:261px;height:1px;background:#dcdcdc"></div>
<div style="position:absolute;left:262px;top:195px;width:1px;height:26px;background:#d0d0d0"></div>
<div style="position:absolute;left:223px;top:195px;width:1px;height:25px;background:#dcdcdc"></div>
<div style="position:absolute;left:223px;top:221px;width:1px;height:217px;background:#f0f0f0"></div>
<div class="t" style="left:9.80px;top:201.60px;font-size:11.5px;font-weight:700;color:#000;transform:scaleX(0.9207);">Status uczestnictwa</div>
<div class="t" style="left:233.00px;top:201.60px;font-size:11.5px;font-weight:700;color:#000;transform:scaleX(0.8772);">Ilość</div>
<div style="position:absolute;left:19px;top:221px;width:1px;height:31px;background:#efefef"></div>
<div style="position:absolute;left:20px;top:251px;width:243px;height:1px;background:#efefef"></div>
<div style="position:absolute;left:262px;top:221px;width:1px;height:31px;background:#efefef"></div>
<div class="t" style="left:24.60px;top:230.20px;font-size:13.3px;font-weight:400;color:#383838;transform:scaleX(0.8979);-webkit-text-stroke:0.2px #383838;">Wszyscy</div>
<div class="t" style="left:228.00px;top:230.20px;font-size:13.3px;font-weight:700;color:#222;transform:scaleX(0.9451);">4</div>
<svg style="left:3.5px;top:229px" width="14" height="14" viewBox="0 0 14 14"><circle cx="6.75" cy="7.4" r="6.0" fill="none" stroke="#333" stroke-width="1.05"/><path d="M4.2 5.0 L8.9 9.7 M9.1 5.6 L9.1 9.9 L4.9 9.9" fill="none" stroke="#333" stroke-width="1.2"/></svg>
<div style="position:absolute;left:37px;top:252px;width:1px;height:31px;background:#efefef"></div>
<div style="position:absolute;left:38px;top:282px;width:225px;height:1px;background:#efefef"></div>
<div style="position:absolute;left:262px;top:252px;width:1px;height:31px;background:#efefef"></div>
<div class="t" style="left:42.20px;top:261.20px;font-size:13.3px;font-weight:400;color:#383838;-webkit-text-stroke:0.2px #383838;">Niepodlegający</div>
<div class="t" style="left:228.00px;top:261.20px;font-size:13.3px;font-weight:700;color:#222;transform:scaleX(0.9451);">0</div>
<div style="position:absolute;left:37px;top:283px;width:1px;height:31px;background:#efefef"></div>
<div style="position:absolute;left:38px;top:313px;width:225px;height:1px;background:#efefef"></div>
<div style="position:absolute;left:262px;top:283px;width:1px;height:31px;background:#efefef"></div>
<div class="t" style="left:42.20px;top:292.20px;font-size:13.3px;font-weight:400;color:#383838;transform:scaleX(0.9661);-webkit-text-stroke:0.2px #383838;">Podlegający</div>
<div class="t" style="left:228.00px;top:292.20px;font-size:13.3px;font-weight:700;color:#222;transform:scaleX(0.9451);">4</div>
<svg style="left:21.5px;top:291px" width="14" height="14" viewBox="0 0 14 14"><circle cx="6.75" cy="7.4" r="6.0" fill="none" stroke="#333" stroke-width="1.05"/><path d="M4.2 5.0 L8.9 9.7 M9.1 5.6 L9.1 9.9 L4.9 9.9" fill="none" stroke="#333" stroke-width="1.2"/></svg>
<div style="position:absolute;left:55px;top:314px;width:1px;height:31px;background:#efefef"></div>
<div style="position:absolute;left:56px;top:344px;width:207px;height:1px;background:#efefef"></div>
<div style="position:absolute;left:262px;top:314px;width:1px;height:31px;background:#efefef"></div>
<div class="t" style="left:60.20px;top:323.20px;font-size:13.3px;font-weight:400;color:#383838;transform:scaleX(0.9793);-webkit-text-stroke:0.2px #383838;">Niezarejestrowani</div>
<div class="t" style="left:228.00px;top:323.20px;font-size:13.3px;font-weight:700;color:#222;transform:scaleX(0.9451);">0</div>
<div style="position:absolute;left:56px;top:345px;width:167px;height:30px;background:#dfe9f4"></div>
<div style="position:absolute;left:224px;top:345px;width:38px;height:30px;background:#dfe9f4"></div>
<div style="position:absolute;left:55px;top:345px;width:1px;height:31px;background:#efefef"></div>
<div style="position:absolute;left:56px;top:375px;width:207px;height:1px;background:#efefef"></div>
<div style="position:absolute;left:262px;top:345px;width:1px;height:31px;background:#efefef"></div>
<div class="t" style="left:60.20px;top:354.20px;font-size:13.3px;font-weight:400;color:#383838;transform:scaleX(0.9713);-webkit-text-stroke:0.2px #383838;">Zarejestrowani</div>
<div class="t" style="left:228.00px;top:354.20px;font-size:13.3px;font-weight:700;color:#222;transform:scaleX(0.9451);">4</div>
<svg style="left:39.5px;top:353px" width="14" height="14" viewBox="0 0 14 14"><circle cx="6.75" cy="7.4" r="6.0" fill="none" stroke="#333" stroke-width="1.05"/><path d="M4.2 5.0 L8.9 9.7 M9.1 5.6 L9.1 9.9 L4.9 9.9" fill="none" stroke="#333" stroke-width="1.2"/></svg>
<div style="position:absolute;left:73px;top:376px;width:1px;height:31px;background:#efefef"></div>
<div style="position:absolute;left:74px;top:406px;width:189px;height:1px;background:#efefef"></div>
<div style="position:absolute;left:262px;top:376px;width:1px;height:31px;background:#efefef"></div>
<div class="t" style="left:78.30px;top:385.20px;font-size:13.3px;font-weight:400;color:#383838;transform:scaleX(0.9549);-webkit-text-stroke:0.2px #383838;">Rezygnacja z wpłat</div>
<div class="t" style="left:228.00px;top:385.20px;font-size:13.3px;font-weight:700;color:#222;transform:scaleX(0.9451);">0</div>
<div style="position:absolute;left:55px;top:407px;width:1px;height:31px;background:#efefef"></div>
<div style="position:absolute;left:56px;top:437px;width:207px;height:1px;background:#efefef"></div>
<div style="position:absolute;left:262px;top:407px;width:1px;height:31px;background:#efefef"></div>
<div class="t" style="left:60.20px;top:416.20px;font-size:13.3px;font-weight:400;color:#383838;transform:scaleX(0.9542);-webkit-text-stroke:0.2px #383838;">Zwolnieni</div>
<div class="t" style="left:228.00px;top:416.20px;font-size:13.3px;font-weight:700;color:#222;transform:scaleX(0.9451);">0</div>
<div class="t" style="left:716.60px;top:166.05px;font-size:15.6px;font-weight:400;color:#787878;transform:scaleX(1.0195);-webkit-text-stroke:0.5px #787878;">Imię i nazwisko</div>
<svg style="left:830px;top:170px" width="10" height="6" viewBox="0 0 10 6"><path d="M1 1 L9 1 L5 5 Z" fill="#7a7a7a"/></svg>
<div style="position:absolute;left:848px;top:165px;width:428px;height:20px;box-sizing:border-box;border:1px solid #b8b8b8;background:transparent"></div>
<div style="position:absolute;left:273px;top:194px;width:1006px;height:1px;background:#c8c8c8"></div>
<div style="position:absolute;left:273px;top:195px;width:1006px;height:25px;background:#fafafa"></div>
<div style="position:absolute;left:273px;top:220px;width:1006px;height:1px;background:#dcdcdc"></div>
<div style="position:absolute;left:292px;top:195px;width:1px;height:25px;background:#dcdcdc"></div>
<div style="position:absolute;left:352px;top:195px;width:1px;height:25px;background:#dcdcdc"></div>
<div style="position:absolute;left:452px;top:195px;width:1px;height:25px;background:#dcdcdc"></div>
<div style="position:absolute;left:552px;top:195px;width:1px;height:25px;background:#dcdcdc"></div>
<div style="position:absolute;left:652px;top:195px;width:1px;height:25px;background:#dcdcdc"></div>
<div style="position:absolute;left:752px;top:195px;width:1px;height:25px;background:#dcdcdc"></div>
<div style="position:absolute;left:852px;top:195px;width:1px;height:25px;background:#dcdcdc"></div>
<div style="position:absolute;left:1022px;top:195px;width:1px;height:25px;background:#dcdcdc"></div>
<div style="position:absolute;left:1132px;top:195px;width:1px;height:25px;background:#dcdcdc"></div>
<div style="position:absolute;left:1242px;top:195px;width:1px;height:25px;background:#dcdcdc"></div>
<div class="t" style="left:302.50px;top:201.60px;font-size:11.5px;font-weight:700;color:#000;transform:scaleX(0.9366);">Podlega</div>
<div class="t" style="left:362.50px;top:201.60px;font-size:11.5px;font-weight:700;color:#000;transform:scaleX(0.9558);">Nr ewidency...</div>
<div class="t" style="left:461.90px;top:201.60px;font-size:11.5px;font-weight:700;color:#000;transform:scaleX(0.9515);">Imię</div>
<div class="t" style="left:562.50px;top:201.60px;font-size:11.5px;font-weight:700;color:#000;transform:scaleX(0.9483);">Drugie imię</div>
<div class="t" style="left:662.50px;top:201.60px;font-size:11.5px;font-weight:700;color:#000;transform:scaleX(0.9309);">Nazwisko</div>
<div class="t" style="left:762.50px;top:201.60px;font-size:11.5px;font-weight:700;color:#000;transform:scaleX(0.7874);">PESEL</div>
<div class="t" style="left:861.90px;top:201.60px;font-size:11.5px;font-weight:700;color:#000;transform:scaleX(0.9074);">Status</div>
<div class="t" style="left:1032.40px;top:201.60px;font-size:11.5px;font-weight:700;color:#000;transform:scaleX(0.9539);">Data obowiązku</div>
<div class="t" style="left:1142.20px;top:201.60px;font-size:11.5px;font-weight:700;color:#000;transform:scaleX(0.9545);">Data zatrudnienia</div>
<div style="position:absolute;left:1252px;top:195px;width:26px;height:25px;overflow:hidden"><div class="t" style="left:0;top:6.6px;font-size:11.5px;font-weight:700;color:#000;transform:scaleX(0.92)">Zwolnienie</div></div>
<svg style="left:439px;top:205px" width="9" height="5" viewBox="0 0 9 5"><path d="M0 5 L4.5 0 L9 5 Z" fill="#6e6e6e"/></svg>
<div style="position:absolute;left:273px;top:221px;width:1006px;height:24px;background:#e0eaf3"></div>
<div style="position:absolute;left:273px;top:245px;width:1006px;height:1px;background:#efefef"></div>
<div class="t" style="left:357.20px;top:228.10px;font-size:11.5px;font-weight:400;color:#333333;transform:scaleX(0.9147);-webkit-text-stroke:0.2px #333333;">000001</div>
<div class="t" style="left:457.20px;top:228.10px;font-size:11.5px;font-weight:400;color:#333333;transform:scaleX(0.8896);-webkit-text-stroke:0.2px #333333;">Jan</div>
<div class="t" style="left:557.20px;top:228.10px;font-size:11.5px;font-weight:400;color:#333333;transform:scaleX(1.0641);-webkit-text-stroke:0.2px #333333;">Antoni</div>
<div class="t" style="left:657.20px;top:228.10px;font-size:11.5px;font-weight:400;color:#333333;-webkit-text-stroke:0.2px #333333;">Testowy</div>
<div class="t" style="left:757.20px;top:228.10px;font-size:11.5px;font-weight:400;color:#333333;transform:scaleX(0.9324);-webkit-text-stroke:0.2px #333333;">67876567654</div>
<div class="t" style="left:857.20px;top:228.10px;font-size:11.5px;font-weight:400;color:#333333;transform:scaleX(0.9870);-webkit-text-stroke:0.2px #333333;">Zarejestrowany - rejestracja ni...</div>
<div class="t" style="left:1027.40px;top:228.10px;font-size:11.5px;font-weight:400;color:#333333;transform:scaleX(0.9312);-webkit-text-stroke:0.2px #333333;">01.07.2019</div>
<div class="t" style="left:1137.40px;top:228.10px;font-size:11.5px;font-weight:400;color:#333333;transform:scaleX(0.9312);-webkit-text-stroke:0.2px #333333;">01.01.2017</div>
<svg style="left:277px;top:227px" width="11" height="11" viewBox="0 0 11 11"><rect x="1" y="1" width="9" height="9" fill="#fff" stroke="#2f6db3" stroke-width="2"/><path d="M3 5.6 L4.6 7.3 L7.8 3.4" fill="none" stroke="#2f6db3" stroke-width="1.2"/></svg>
<svg style="left:316px;top:228px" width="14" height="11" viewBox="0 0 14 11"><path d="M0.8 5.5 L5 9.6 L13.2 1.4" fill="none" stroke="#49a97f" stroke-width="2.6"/></svg>
<div style="position:absolute;left:273px;top:270px;width:1006px;height:1px;background:#efefef"></div>
<div class="t" style="left:357.20px;top:253.10px;font-size:11.5px;font-weight:400;color:#333333;transform:scaleX(0.9147);-webkit-text-stroke:0.2px #333333;">000002</div>
<div class="t" style="left:457.20px;top:253.10px;font-size:11.5px;font-weight:400;color:#333333;transform:scaleX(1.0166);-webkit-text-stroke:0.2px #333333;">Brunhilda</div>
<div class="t" style="left:557.20px;top:253.10px;font-size:11.5px;font-weight:400;color:#333333;transform:scaleX(0.9879);-webkit-text-stroke:0.2px #333333;">Helga</div>
<div class="t" style="left:657.20px;top:253.10px;font-size:11.5px;font-weight:400;color:#333333;transform:scaleX(0.9772);-webkit-text-stroke:0.2px #333333;">Schmidt</div>
<div class="t" style="left:857.20px;top:253.10px;font-size:11.5px;font-weight:400;color:#333333;transform:scaleX(0.9870);-webkit-text-stroke:0.2px #333333;">Zarejestrowany - rejestracja ni...</div>
<div class="t" style="left:1027.40px;top:253.10px;font-size:11.5px;font-weight:400;color:#333333;transform:scaleX(0.9312);-webkit-text-stroke:0.2px #333333;">01.07.2019</div>
<div class="t" style="left:1137.40px;top:253.10px;font-size:11.5px;font-weight:400;color:#333333;transform:scaleX(0.9312);-webkit-text-stroke:0.2px #333333;">09.05.2016</div>
<svg style="left:277px;top:252px" width="11" height="11" viewBox="0 0 11 11"><rect x="1" y="1" width="9" height="9" fill="#fff" stroke="#2f6db3" stroke-width="2"/><path d="M3 5.6 L4.6 7.3 L7.8 3.4" fill="none" stroke="#2f6db3" stroke-width="1.2"/></svg>
<svg style="left:316px;top:253px" width="14" height="11" viewBox="0 0 14 11"><path d="M0.8 5.5 L5 9.6 L13.2 1.4" fill="none" stroke="#49a97f" stroke-width="2.6"/></svg>
<div style="position:absolute;left:273px;top:295px;width:1006px;height:1px;background:#efefef"></div>
<div class="t" style="left:357.20px;top:278.10px;font-size:11.5px;font-weight:400;color:#333333;transform:scaleX(0.9147);-webkit-text-stroke:0.2px #333333;">000003</div>
<div class="t" style="left:457.20px;top:278.10px;font-size:11.5px;font-weight:400;color:#333333;transform:scaleX(0.9895);-webkit-text-stroke:0.2px #333333;">Sławomir</div>
<div class="t" style="left:657.20px;top:278.10px;font-size:11.5px;font-weight:400;color:#333333;transform:scaleX(1.0382);-webkit-text-stroke:0.2px #333333;">Malinowski</div>
<div class="t" style="left:757.20px;top:278.10px;font-size:11.5px;font-weight:400;color:#333333;transform:scaleX(0.9324);-webkit-text-stroke:0.2px #333333;">98565421543</div>
<div class="t" style="left:857.20px;top:278.10px;font-size:11.5px;font-weight:400;color:#333333;transform:scaleX(0.9870);-webkit-text-stroke:0.2px #333333;">Zarejestrowany - rejestracja ni...</div>
<div class="t" style="left:1027.40px;top:278.10px;font-size:11.5px;font-weight:400;color:#333333;transform:scaleX(0.9312);-webkit-text-stroke:0.2px #333333;">01.07.2019</div>
<div class="t" style="left:1137.40px;top:278.10px;font-size:11.5px;font-weight:400;color:#333333;transform:scaleX(0.9312);-webkit-text-stroke:0.2px #333333;">01.01.2018</div>
<svg style="left:277px;top:277px" width="11" height="11" viewBox="0 0 11 11"><rect x="1" y="1" width="9" height="9" fill="#fff" stroke="#2f6db3" stroke-width="2"/><path d="M3 5.6 L4.6 7.3 L7.8 3.4" fill="none" stroke="#2f6db3" stroke-width="1.2"/></svg>
<svg style="left:316px;top:278px" width="14" height="11" viewBox="0 0 14 11"><path d="M0.8 5.5 L5 9.6 L13.2 1.4" fill="none" stroke="#49a97f" stroke-width="2.6"/></svg>
<div style="position:absolute;left:273px;top:320px;width:1006px;height:1px;background:#efefef"></div>
<div class="t" style="left:357.20px;top:303.10px;font-size:11.5px;font-weight:400;color:#333333;transform:scaleX(0.9143);-webkit-text-stroke:0.2px #333333;">15</div>
<div class="t" style="left:457.20px;top:303.10px;font-size:11.5px;font-weight:400;color:#333333;transform:scaleX(0.8896);-webkit-text-stroke:0.2px #333333;">Jan</div>
<div class="t" style="left:657.20px;top:303.10px;font-size:11.5px;font-weight:400;color:#333333;-webkit-text-stroke:0.2px #333333;">Nowak</div>
<div class="t" style="left:757.20px;top:303.10px;font-size:11.5px;font-weight:400;color:#333333;transform:scaleX(0.9324);-webkit-text-stroke:0.2px #333333;">65031202250</div>
<div class="t" style="left:857.20px;top:303.10px;font-size:11.5px;font-weight:400;color:#333333;transform:scaleX(0.9870);-webkit-text-stroke:0.2px #333333;">Zarejestrowany - rejestracja ni...</div>
<div class="t" style="left:1027.40px;top:303.10px;font-size:11.5px;font-weight:400;color:#333333;transform:scaleX(0.9312);-webkit-text-stroke:0.2px #333333;">01.07.2019</div>
<div class="t" style="left:1137.40px;top:303.10px;font-size:11.5px;font-weight:400;color:#333333;transform:scaleX(0.9312);-webkit-text-stroke:0.2px #333333;">21.08.2010</div>
<svg style="left:277px;top:302px" width="11" height="11" viewBox="0 0 11 11"><rect x="0.5" y="0.5" width="10" height="10" fill="#fff" stroke="#d0d0d0" stroke-width="1"/></svg>
<svg style="left:316px;top:303px" width="14" height="11" viewBox="0 0 14 11"><path d="M0.8 5.5 L5 9.6 L13.2 1.4" fill="none" stroke="#49a97f" stroke-width="2.6"/></svg>
<div style="position:absolute;left:273px;top:525px;width:1006px;height:1px;background:#c8c8c8"></div>
<svg style="left:280px;top:531px" width="3.5" height="6.5" viewBox="0 0 3.5 6.5"><path d="M3.5 0 L0 3.25 L3.5 6.5 Z" fill="#858585"/></svg>
<div style="position:absolute;left:290px;top:530px;width:849px;height:8px;background:#b5b5b5"></div>
<svg style="left:1269px;top:531px" width="3.5" height="6.5" viewBox="0 0 3.5 6.5"><path d="M0 0 L3.5 3.25 L0 6.5 Z" fill="#858585"/></svg>
<div style="position:absolute;left:2px;top:569px;width:1277px;height:1px;background:#c9c9c9"></div>
<div style="position:absolute;left:8px;top:544px;width:109px;height:26px;box-sizing:border-box;border:1px solid #c9c9c9;border-bottom:none;background:#fff"></div>
<div class="t" style="left:25.00px;top:552.10px;font-size:11.5px;font-weight:400;color:#1a1a1a;-webkit-text-stroke:0.2px #1a1a1a;">Uczestnictwo</div>
<div style="position:absolute;left:122px;top:544px;width:129px;height:26px;box-sizing:border-box;border:1px solid #c9c9c9;background:#fff"></div>
<div class="t" style="left:139.50px;top:552.10px;font-size:11.5px;font-weight:400;color:#6a6a6a;transform:scaleX(0.9903);-webkit-text-stroke:0.2px #6a6a6a;">Naliczone składki</div>
<div style="position:absolute;left:257px;top:544px;width:93px;height:26px;box-sizing:border-box;border:1px solid #c9c9c9;background:#fff"></div>
<div class="t" style="left:274.00px;top:552.10px;font-size:11.5px;font-weight:400;color:#6a6a6a;transform:scaleX(0.9664);-webkit-text-stroke:0.2px #6a6a6a;">Deklaracje</div>
<div style="position:absolute;left:356px;top:544px;width:123px;height:26px;box-sizing:border-box;border:1px solid #c9c9c9;background:#fff"></div>
<div class="t" style="left:373.00px;top:552.10px;font-size:11.5px;font-weight:400;color:#6a6a6a;transform:scaleX(1.0143);-webkit-text-stroke:0.2px #6a6a6a;">Adresy i kontakt</div>
<div style="position:absolute;left:485px;top:544px;width:116px;height:26px;box-sizing:border-box;border:1px solid #c9c9c9;background:#fff"></div>
<div class="t" style="left:501.90px;top:552.10px;font-size:11.5px;font-weight:400;color:#6a6a6a;transform:scaleX(0.9681);-webkit-text-stroke:0.2px #6a6a6a;">Zmiany danych</div>
<div class="t" style="left:64.60px;top:630.35px;font-size:18px;font-weight:400;color:#1a1a1a;transform:scaleX(1.0170);-webkit-text-stroke:0.2px #1a1a1a;">Składki uczestnika</div>
<div class="t" style="left:357.60px;top:630.35px;font-size:18px;font-weight:400;color:#1a1a1a;transform:scaleX(1.0303);-webkit-text-stroke:0.2px #1a1a1a;">Składki pracodawcy</div>
<div class="t" style="left:609.40px;top:630.35px;font-size:18px;font-weight:400;color:#1a1a1a;transform:scaleX(1.0489);-webkit-text-stroke:0.2px #1a1a1a;">Umowa z instytucją finansową</div>
<div class="t" style="left:83.30px;top:663.60px;font-size:11.5px;font-weight:400;color:#141414;transform:scaleX(1.0338);-webkit-text-stroke:0.2px #141414;">podstawowa</div>
<div class="t" style="left:159.00px;top:663.60px;font-size:11.5px;font-weight:700;color:#1a1a1a;transform:scaleX(0.9290);">2,00</div>
<div class="t" style="left:91.50px;top:687.60px;font-size:11.5px;font-weight:400;color:#141414;transform:scaleX(1.0409);-webkit-text-stroke:0.2px #141414;">dodatkowa</div>
<div class="t" style="left:159.00px;top:687.60px;font-size:11.5px;font-weight:700;color:#1a1a1a;transform:scaleX(0.9290);">0,00</div>
<div class="t" style="left:64.60px;top:711.60px;font-size:11.5px;font-weight:400;color:#141414;transform:scaleX(0.9545);-webkit-text-stroke:0.2px #141414;">Pierwsza składka</div>
<div class="t" style="left:159.00px;top:711.60px;font-size:11.5px;font-weight:700;color:#1a1a1a;transform:scaleX(0.9346);">01.07.2019</div>
<div class="t" style="left:357.60px;top:660.60px;font-size:11.5px;font-weight:400;color:#141414;transform:scaleX(1.0244);-webkit-text-stroke:0.2px #141414;">podstawowa</div>
<div class="t" style="left:433.70px;top:660.60px;font-size:11.5px;font-weight:700;color:#1a1a1a;transform:scaleX(0.9066);">1,50</div>
<div class="t" style="left:365.80px;top:684.60px;font-size:11.5px;font-weight:400;color:#141414;transform:scaleX(1.0301);-webkit-text-stroke:0.2px #141414;">dodatkowa</div>
<div class="t" style="left:433.70px;top:684.60px;font-size:11.5px;font-weight:700;color:#1a1a1a;transform:scaleX(0.9066);">2,50</div>
<div class="t" style="left:609.40px;top:660.60px;font-size:11.5px;font-weight:400;color:#141414;transform:scaleX(1.0129);-webkit-text-stroke:0.2px #141414;">Instytucja finansowa</div>
<div class="t" style="left:724.10px;top:660.60px;font-size:11.5px;font-weight:700;color:#1a1a1a;transform:scaleX(0.9406);">Testowa instytucja finansowa 1</div>
<div class="t" style="left:676.80px;top:684.60px;font-size:11.5px;font-weight:400;color:#141414;transform:scaleX(0.9619);-webkit-text-stroke:0.2px #141414;">Umowa</div>
<div class="t" style="left:724.10px;top:684.60px;font-size:11.5px;font-weight:700;color:#1a1a1a;transform:scaleX(0.9371);">0000000001 z dnia 01.07.2019</div>
<div class="t" style="left:618.70px;top:708.60px;font-size:11.5px;font-weight:400;color:#141414;transform:scaleX(0.9775);-webkit-text-stroke:0.2px #141414;">Grupa uczestników</div>
<div class="t" style="left:724.10px;top:708.60px;font-size:11.5px;font-weight:700;color:#1a1a1a;transform:scaleX(0.9540);">Grupa podstawowa</div>
<div style="position:absolute;left:2px;top:842px;width:1277px;height:1px;background:#c9c9c9"></div>
<div class="t" style="left:4.60px;top:850.60px;font-size:11.5px;font-weight:400;color:#8a8a8a;transform:scaleX(0.8929);-webkit-text-stroke:0.2px #8a8a8a;">Ins</div>
<div style="position:absolute;left:4px;top:866px;width:75px;height:23px;box-sizing:border-box;border:1px solid #acacac;background:#fff"></div>
<div class="t" style="left:26.30px;top:872.80px;font-size:11.5px;font-weight:400;color:#111;transform:scaleX(1.0112);-webkit-text-stroke:0.12px #111;">Dodaj</div>
<div class="t" style="left:85.60px;top:850.60px;font-size:11.5px;font-weight:400;color:#8a8a8a;transform:scaleX(0.7898);-webkit-text-stroke:0.2px #8a8a8a;">F2</div>
<div style="position:absolute;left:85px;top:866px;width:75px;height:23px;box-sizing:border-box;border:1px solid #acacac;background:#fff"></div>
<div class="t" style="left:103.30px;top:872.80px;font-size:11.5px;font-weight:400;color:#111;transform:scaleX(0.9846);-webkit-text-stroke:0.12px #111;">Popraw</div>
<div class="t" style="left:166.60px;top:850.60px;font-size:11.5px;font-weight:400;color:#8a8a8a;transform:scaleX(0.9499);-webkit-text-stroke:0.2px #8a8a8a;">Del</div>
<div style="position:absolute;left:166px;top:866px;width:75px;height:23px;box-sizing:border-box;border:1px solid #acacac;background:#fff"></div>
<div class="t" style="left:190.00px;top:872.80px;font-size:11.5px;font-weight:400;color:#111;transform:scaleX(1.0052);-webkit-text-stroke:0.12px #111;">Usuń</div>
<div class="t" style="left:247.60px;top:850.60px;font-size:11.5px;font-weight:400;color:#8a8a8a;transform:scaleX(1.0254);-webkit-text-stroke:0.2px #8a8a8a;">Ctrl+O</div>
<div style="position:absolute;left:247px;top:866px;width:75px;height:23px;box-sizing:border-box;border:1px solid #acacac;background:#fff"></div>
<div class="t" style="left:261.75px;top:872.80px;font-size:11.5px;font-weight:400;color:#111;transform:scaleX(0.9749);-webkit-text-stroke:0.12px #111;">Operacje</div>
<div class="t" style="left:328.60px;top:850.60px;font-size:11.5px;font-weight:400;color:#8a8a8a;transform:scaleX(1.0347);-webkit-text-stroke:0.2px #8a8a8a;">Ctrl+W</div>
<div style="position:absolute;left:328px;top:866px;width:75px;height:23px;box-sizing:border-box;border:1px solid #acacac;background:#fff"></div>
<div class="t" style="left:345.50px;top:872.80px;font-size:11.5px;font-weight:400;color:#111;transform:scaleX(0.9653);-webkit-text-stroke:0.12px #111;">Wydruki</div>
<div class="t" style="left:1201.50px;top:850.60px;font-size:11.5px;font-weight:400;color:#8a8a8a;transform:scaleX(0.8085);-webkit-text-stroke:0.2px #8a8a8a;">Esc</div>
<div style="position:absolute;left:1201px;top:866px;width:75px;height:23px;box-sizing:border-box;border:1px solid #8aa6c4;background:#eef3f8"></div>
<div style="position:absolute;left:1214px;top:870px;width:49px;height:15px;box-sizing:border-box;border:1px dotted #222"></div>
<div class="t" style="left:1218.75px;top:872.80px;font-size:11.5px;font-weight:400;color:#111;transform:scaleX(0.9810);-webkit-text-stroke:0.12px #111;">Zamknij</div>
<div style="position:absolute;left:3px;top:898px;width:211px;height:20px;box-sizing:border-box;border:1px solid #bcbcbc;background:#fff"></div>
<div class="t" style="left:7.50px;top:902.60px;font-size:11.5px;font-weight:400;color:#6a6a6a;transform:scaleX(0.9550);-webkit-text-stroke:0.2px #6a6a6a;">Serwer: WAWN041</div>
<div style="position:absolute;left:220px;top:898px;width:211px;height:20px;box-sizing:border-box;border:1px solid #bcbcbc;background:#fff"></div>
<div class="t" style="left:224.50px;top:902.60px;font-size:11.5px;font-weight:400;color:#6a6a6a;transform:scaleX(0.8581);-webkit-text-stroke:0.2px #6a6a6a;">Baza: WAPRO_DEMO</div>
<div style="position:absolute;left:437px;top:898px;width:211px;height:20px;box-sizing:border-box;border:1px solid #bcbcbc;background:#fff"></div>
<div class="t" style="left:441.50px;top:902.60px;font-size:11.5px;font-weight:400;color:#6a6a6a;transform:scaleX(1.0072);-webkit-text-stroke:0.2px #6a6a6a;">Użytkownik:</div>
<div style="position:absolute;left:654px;top:898px;width:211px;height:20px;box-sizing:border-box;border:1px solid #bcbcbc;background:#fff"></div>
<div class="t" style="left:658.50px;top:902.60px;font-size:11.5px;font-weight:400;color:#6a6a6a;transform:scaleX(0.9419);-webkit-text-stroke:0.2px #6a6a6a;">NIP firmy: 5222612717</div>
<div style="position:absolute;left:871px;top:898px;width:406px;height:20px;box-sizing:border-box;border:1px solid #bcbcbc;background:#fff"></div>
<div class="t" style="left:875.50px;top:902.60px;font-size:11.5px;font-weight:400;color:#6a6a6a;transform:scaleX(0.8868);-webkit-text-stroke:0.2px #6a6a6a;">NAZWA firmy: ASSECO BUSINESS SOLUTIONS SPÓŁKA AKCYJNA</div>
<div style="position:absolute;left:0px;top:0px;width:1280px;height:2px;background:#c2c2c2"></div>
<div style="position:absolute;left:0px;top:0px;width:2px;height:921px;background:#c2c2c2"></div>
<div style="position:absolute;left:1279px;top:0px;width:1px;height:921px;background:#c2c2c2"></div>
<div style="position:absolute;left:0px;top:919px;width:1280px;height:2px;background:#c2c2c2"></div>
</body></html>
